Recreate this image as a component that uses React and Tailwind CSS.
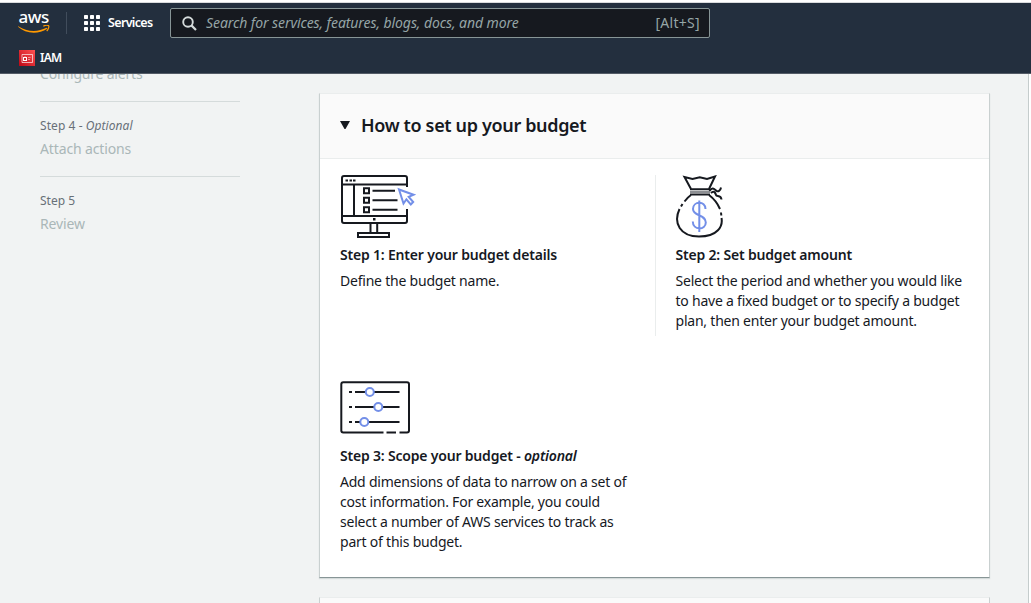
import React from "react";

function AwsLogo() {
  return (
    <div className="relative h-6 w-8">
      <span className="absolute left-[0.5px] -top-[4px] text-[17px] leading-5 font-medium tracking-[-0.5px] text-white">aws</span>
      <svg className="absolute left-0 top-[14px]" width="32" height="9" viewBox="0 0 32 9" fill="none">
        <path d="M0.3 1.2C8.5 6.8 19.5 7.5 28.5 2.8L29.3 3.8C20 9.8 7.5 8.8 0 1.8Z" fill="#ff9900" />
        <path d="M25.3 1.2C27.3 0.2 30 0.1 30.7 0.8C31.2 1.7 30.3 4.6 28.7 6" stroke="#ff9900" strokeWidth="1.2" />
      </svg>
    </div>
  );
}

function GridIcon() {
  const cells = [0, 6, 12];
  return (
    <svg width="16" height="16" viewBox="0 0 16 16" fill="#fff">
      {cells.map((y) => cells.map((x) => <rect key={`${x}-${y}`} x={x} y={y} width="4" height="4" rx="0.7" />))}
    </svg>
  );
}

function IamIcon() {
  return (
    <svg width="16" height="16" viewBox="0 0 16 16" fill="none">
      <defs>
        <linearGradient id="iam" x1="0" y1="16" x2="16" y2="0" gradientUnits="userSpaceOnUse">
          <stop stopColor="#bd0816" />
          <stop offset="1" stopColor="#ff5252" />
        </linearGradient>
      </defs>
      <rect width="16" height="16" fill="url(#iam)" />
      <path d="M3 12.5V4.5H13.5V12.5Z" stroke="#fff" strokeOpacity="0.65" />
      <rect x="4.5" y="7.5" width="3" height="3" stroke="#fff" />
      <path d="M6 6V7.5M9 7.5H11.5M9 9.5H11" stroke="#fff" strokeOpacity="0.5" />
    </svg>
  );
}

function Header() {
  return (
    <header className="h-[71px] shrink-0 border-b border-[#535b66] bg-[#232f3e] text-white">
      <div className="flex h-10 items-center">
        <div className="ml-[18px] w-12">
          <AwsLogo />
        </div>
        <div className="h-[22px] w-px bg-[#414d5c]" />
        <div className="ml-[17px]">
          <GridIcon />
        </div>
        <span className="ml-2 w-[62px] text-[12.5px] font-semibold tracking-[-0.65px]">Services</span>
        <div className="flex h-[30px] w-[540px] items-center rounded-[2px] border border-[#879596] bg-[#16191f] text-[#95a5a6]">
          <svg className="ml-[11px]" width="15" height="15" viewBox="0 0 15 15" fill="none" stroke="#d5dbdb" strokeWidth="1.9">
            <circle cx="6" cy="6" r="4.8" />
            <path d="M9.4 9.4L14 14" strokeWidth="2.2" />
          </svg>
          <span className="ml-[9px] whitespace-nowrap pb-px text-[14px] italic tracking-[-0.08px]">Search for services, features, blogs, docs, and more</span>
          <span className="ml-auto mr-[9px] pb-px text-[14px] tracking-[0.3px]">[Alt+S]</span>
        </div>
      </div>
      <div className="ml-[19px] flex h-[30px] items-center gap-[5px]">
        <IamIcon />
        <span className="text-[12px] font-semibold tracking-[-0.8px]">IAM</span>
      </div>
    </header>
  );
}

function Sidebar() {
  return (
    <aside className="ml-10 w-[200px] text-[14px] text-[#aab7b8]">
      <div className="-mt-[10px] h-[38px] border-b border-[#d5dbdb] leading-5 tracking-[-0.2px]">Configure alerts</div>
      <div className="h-[75px] border-b border-[#d5dbdb] pt-[14px]">
        <div className="text-[12px] leading-5 tracking-[0.07px] text-[#687078]">
          Step 4 - <i>Optional</i>
        </div>
        <div className="mt-[3px] leading-5 tracking-[-0.13px]">Attach actions</div>
      </div>
      <div className="pt-[14px]">
        <div className="text-[12px] leading-5 text-[#687078]">Step 5</div>
        <div className="mt-[3px] leading-5 tracking-[-0.13px]">Review</div>
      </div>
    </aside>
  );
}

function MonitorIcon() {
  return (
    <svg className="ml-px" width="75" height="64" viewBox="0 0 75 64" fill="none" stroke="#16191f" strokeWidth="2">
      <path d="M66 12V3Q66 1 64 1H3Q1 1 1 3V46Q1 48 3 48H64Q66 48 66 46V34M1 9.5H66M13 9.5V41M1 41H66" />
      <path d="M4.5 5.5H7M8.5 5.5H11M12 5.5H14.5" />
      <path d="M23 13.2H28V18.2H23ZM23 22.7H28V27.7H23ZM23 32.2H28V37.2H23Z" />
      <path d="M31.5 15.7H54M31.5 25.2H56.5M31.5 34.7H56.5" />
      <rect x="32" y="43" width="2.5" height="2.5" fill="#16191f" stroke="none" />
      <path d="M29.5 48V57.5M36.2 48V57.5" />
      <rect x="17" y="58" width="31" height="4" />
      <path d="M58 14.5L62.5 28.5L65.4 24.3L69.8 29.5L72.2 27L67.7 21.8L72.5 19.7Z" stroke="#738fe8" fill="#fff" />
    </svg>
  );
}

function MoneyBagIcon() {
  return (
    <svg className="-ml-[0.5px]" width="50" height="64" viewBox="0 0 50 64" fill="none" stroke="#16191f" strokeWidth="2">
      <path d="M16 14L9.5 2L17.5 4L24.8 2.2L32 4L40 1.5L34 14" />
      <path d="M15 14.3H35M15 19.5H35" />
      <path d="M15 17H35" stroke="#8c8e92" />
      <path d="M34.5 16C37 12 39 13.5 41 15.5S45.5 15.5 46 12.5M36 18C39 15 40.5 18 41 20S46 19.5 46.5 24.5" />
      <path d="M16 20C13 22 11 24.5 9.5 26.5M7.5 29L6 31.5M4.5 34C-2 48 5 61.5 24 61.5C43 61.5 48 51 46.5 43M46.3 40.5L46 37.5M45 34C42 27 38 23 34 20" />
      <path d="M30.5 34C30.5 25.5 18 26 18 34C18 41.5 30.8 39 30.8 47.5C30.8 55.5 17.8 55.5 17.8 46.5M24.3 25.5V57" stroke="#738fe8" />
    </svg>
  );
}

function SlidersIcon() {
  return (
    <svg width="70" height="53" viewBox="0 0 70 53" fill="none" stroke="#16191f" strokeWidth="2">
      <path d="M43.5 51.5H3.3Q1.3 51.5 1.3 49.5V3.3Q1.3 1.3 3.3 1.3H67Q69 1.3 69 3.3V49.5Q69 51.5 67 51.5H59.5M46.5 51.5H56" />
      <path d="M9 11H12M15 11H59.5M9 26H12M15 26H59.5M9 41H12M15 41H59.5" />
      <g stroke="#738fe8" fill="#fff">
        <circle cx="29.8" cy="11" r="4" />
        <circle cx="38.3" cy="26" r="4" />
        <circle cx="24.3" cy="41" r="4" />
      </g>
    </svg>
  );
}

function Step({ icon, title, lines }) {
  return (
    <div className="whitespace-nowrap text-[14px] leading-5">
      {icon}
      <h3 className="font-semibold tracking-[-0.19px]">{title}</h3>
      <div className="mt-[6px] tracking-[-0.22px]">
        {lines.map((line) => (
          <p key={line}>{line}</p>
        ))}
      </div>
    </div>
  );
}

function BudgetCard() {
  return (
    <section className="h-[485px] w-[671px] border border-t-[#eaeded] border-x-[#c9d0d0] border-b-[#879596] bg-white shadow-[0_1px_1px_0_#d5dbdb]">
      <div className="flex h-[65px] items-center border-b border-[#eaeded] bg-[#fafafa] pb-[2px] pl-5">
        <svg width="10" height="8" viewBox="0 0 10 8" fill="#16191f">
          <path d="M0 0H10L5.5 8H4.5Z" />
        </svg>
        <h2 className="ml-[11px] whitespace-nowrap pb-px text-[18px] leading-6 font-semibold tracking-[-0.35px]">How to set up your budget</h2>
      </div>
      <div className="grid grid-cols-[336px_1fr] pt-4">
        <div className="h-[161px] border-r border-[#eaeded] pl-5">
          <Step icon={<div className="h-[70px]"><MonitorIcon /></div>} title="Step 1: Enter your budget details" lines={["Define the budget name."]} />
        </div>
        <div className="pl-[19.5px]">
          <Step
            icon={<div className="h-[70px]"><MoneyBagIcon /></div>}
            title="Step 2: Set budget amount"
            lines={["Select the period and whether you would like", "to have a fixed budget or to specify a budget", "plan, then enter your budget amount."]}
          />
        </div>
        <div className="pl-5 pt-[45px]">
          <Step
            icon={<div className="h-[65px]"><SlidersIcon /></div>}
            title={<>Step 3: Scope your budget - <i>optional</i></>}
            lines={["Add dimensions of data to narrow on a set of", "cost information. For example, you could", "select a number of AWS services to track as", "part of this budget."]}
          />
        </div>
      </div>
    </section>
  );
}

export default function App() {
  return (
    <div className="flex h-[603px] w-[1031px] flex-col overflow-hidden border-t-2 border-white bg-[#f1f3f3] font-['Noto_Sans',sans-serif] text-[#16191f]">
      <div className="h-px shrink-0 bg-[#d9dbdd]" />
      <Header />
      <div className="flex min-h-0 flex-1 overflow-hidden">
        <Sidebar />
        <main className="ml-[79px] pt-[19px]">
          <BudgetCard />
          <div className="mt-[19px] h-10 w-[671px] border border-x-[#c9d0d0] border-t-[#eaeded] bg-[#fafafa]" />
        </main>
        <div className="ml-auto h-full w-[3px] border-l border-[#c5cccc] bg-white" />
      </div>
    </div>
  );
}
